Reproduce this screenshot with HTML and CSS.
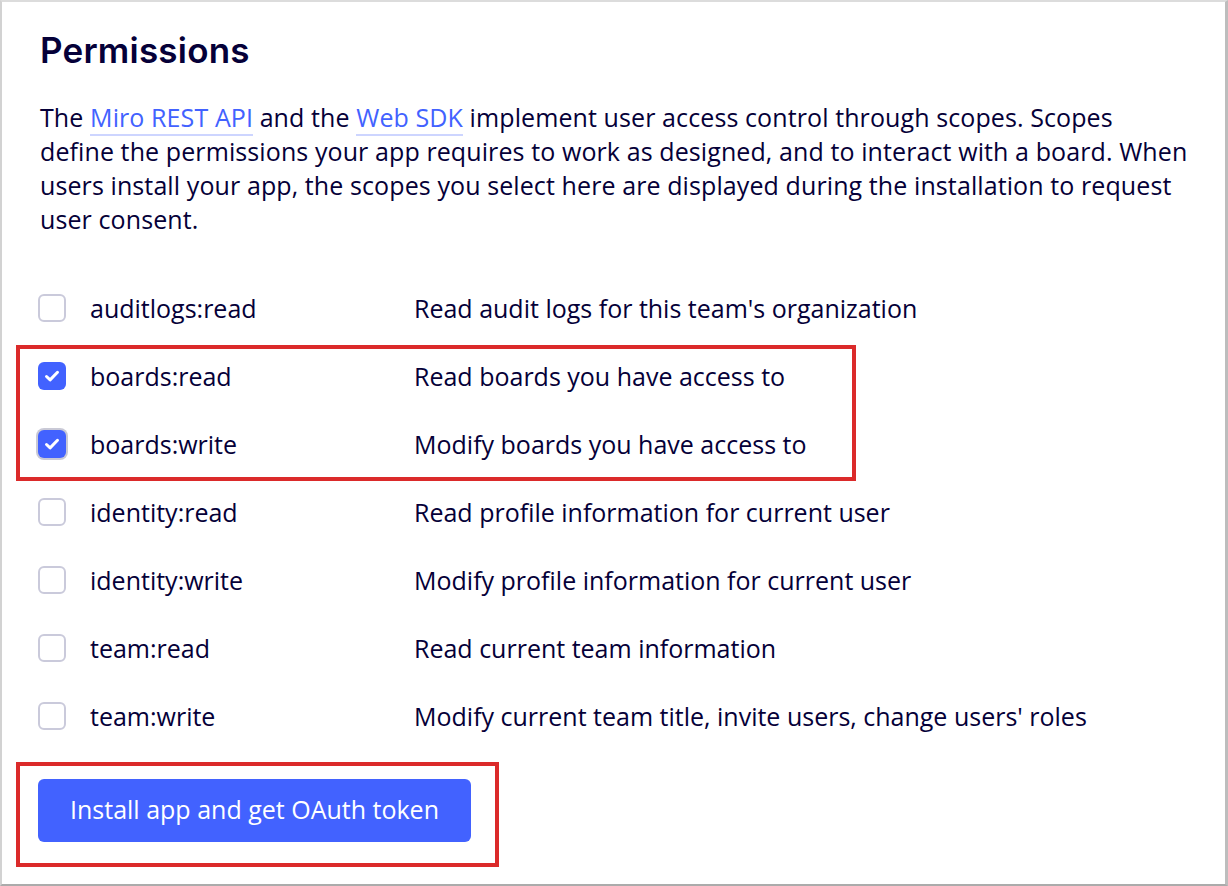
FILE: index.html
```html
<!DOCTYPE html>
<html lang="en">
<head>
<meta charset="utf-8">
<title>Permissions</title>
<link rel="stylesheet" href="styles.css">
</head>
<body>
<div class="frame">
  <h1 class="title">Permissions</h1>
  <p class="intro">The <a class="link" href="#">Miro REST API</a> and the <a class="link" href="#">Web SDK</a> implement user access control through scopes. Scopes define the permissions your app requires to work as designed, and to interact with a board. When users install your app, the scopes you select here are displayed during the installation to request user consent.</p>
  <ul class="scopes">
    <li class="scope"><span class="box"></span><span class="name">auditlogs:read</span><span class="desc">Read audit logs for this team's organization</span></li>
    <li class="scope"><span class="box checked"><svg viewBox="0 0 28 28" width="28" height="28"><path d="M8.5 14.5l3.6 3.4 7.4-7.6" fill="none" stroke="#fff" stroke-width="3" stroke-linecap="round" stroke-linejoin="round"/></svg></span><span class="name">boards:read</span><span class="desc">Read boards you have access to</span></li>
    <li class="scope"><span class="box checked focus"><svg viewBox="0 0 28 28" width="28" height="28"><path d="M8.5 14.5l3.6 3.4 7.4-7.6" fill="none" stroke="#fff" stroke-width="3" stroke-linecap="round" stroke-linejoin="round"/></svg></span><span class="name">boards:write</span><span class="desc">Modify boards you have access to</span></li>
    <li class="scope"><span class="box"></span><span class="name">identity:read</span><span class="desc">Read profile information for current user</span></li>
    <li class="scope"><span class="box"></span><span class="name">identity:write</span><span class="desc">Modify profile information for current user</span></li>
    <li class="scope"><span class="box"></span><span class="name">team:read</span><span class="desc">Read current team information</span></li>
    <li class="scope"><span class="box"></span><span class="name">team:write</span><span class="desc">Modify current team title, invite users, change users' roles</span></li>
  </ul>
  <button class="install">Install app and get OAuth token</button>
  <div class="mark mark-scopes"></div>
  <div class="mark mark-button"></div>
</div>
</body>
</html>
```
FILE: styles.css
```css
* { box-sizing: border-box; }
html, body { margin: 0; padding: 0; background: #fff; }
body {
  font-family: "Open Sans", "Noto Sans", sans-serif;
  color: #050038;
}
.frame {
  position: relative;
  width: 1228px;
  height: 886px;
  border-top: 2px solid #dcdcdc;
  border-left: 2px solid #d2d2d2;
  border-right: 3px solid #bdbdbd;
  border-bottom: 2px solid #ababab;
  padding: 0 0 0 36px;
  overflow: hidden;
}
.title {
  margin: 28px 0 0 2px;
  font-family: Inter, "Noto Sans", sans-serif;
  font-weight: 600;
  font-size: 35px;
  line-height: 40px;
  letter-spacing: 0.2px;
  color: #050038;
}
.intro {
  margin: 30px 32px 0 2px;
  font-size: 25px;
  line-height: 34px;
  letter-spacing: 0.1px;
  color: #050038;
}
.link {
  color: #4262ff;
  text-decoration: none;
  border-bottom: 2px solid #cdd5ff;
}
.scopes {
  list-style: none;
  margin: 38px 0 0 0;
  padding: 0;
}
.scope {
  display: flex;
  align-items: center;
  height: 68px;
  font-size: 25px;
}
.box {
  width: 28px;
  height: 28px;
  border: 2px solid #cacadb;
  border-radius: 6px;
  flex: none;
  display: flex;
  align-items: center;
  justify-content: center;
}
.box.checked {
  border: none;
  background: #4262ff;
}
.box.checked.focus {
  box-shadow: 0 0 0 2px #c9c9d6;
}
.name {
  margin-left: 24px;
  width: 324px;
  flex: none;
}
.desc { flex: none; }
.install {
  display: block;
  margin-top: 29px;
  width: 433px;
  height: 63px;
  padding: 0 0 3px;
  background: #4262ff;
  color: #fff;
  border: none;
  border-radius: 6px;
  font-family: "Open Sans", "Noto Sans", sans-serif;
  font-size: 25px;
}
.mark {
  position: absolute;
  border: 4px solid #db2a2a;
}
.mark-scopes {
  left: 14px;
  top: 343px;
  width: 840px;
  height: 136px;
}
.mark-button {
  left: 14px;
  top: 760px;
  width: 483px;
  height: 105px;
}
```
